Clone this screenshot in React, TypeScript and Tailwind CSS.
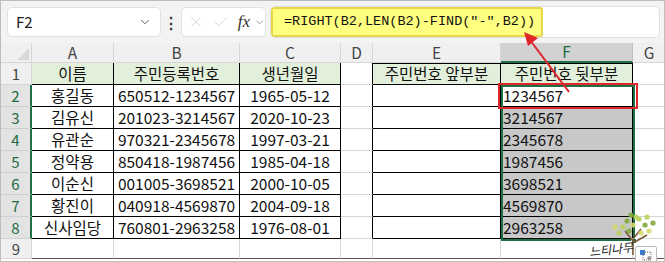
import { ChevronDown, X, Check } from "lucide-react";

const COLS = [31, 82, 126, 101, 32, 128, 132, 33];
const LETTERS = ["", "A", "B", "C", "D", "E", "F", "G"];

const DATA = [
  ["홍길동", "650512-1234567", "1965-05-12", "1234567"],
  ["김유신", "201023-3214567", "2020-10-23", "3214567"],
  ["유관순", "970321-2345678", "1997-03-21", "2345678"],
  ["정약용", "850418-1987456", "1985-04-18", "1987456"],
  ["이순신", "001005-3698521", "2000-10-05", "3698521"],
  ["황진이", "040918-4569870", "2004-09-18", "4569870"],
  ["신사임당", "760801-2963258", "1976-08-01", "2963258"],
];

const font = { fontFamily: '"Noto Sans CJK KR", "Noto Sans", sans-serif' };

function Cell({
  w,
  h,
  children,
  className = "",
}: {
  w: number;
  h: number;
  children?: React.ReactNode;
  className?: string;
}) {
  return (
    <div
      style={{ width: w, height: h }}
      className={`shrink-0 box-border flex items-center whitespace-nowrap leading-none ${className}`}
    >
      {children}
    </div>
  );
}

function FormulaBar() {
  return (
    <div className="flex items-center h-[42px] bg-[#f3f3f3] pl-[6px] pr-[4px] gap-0">
      <div className="flex items-center justify-between w-[154px] h-[30px] bg-white rounded-[5px] border border-[#e2e2e2] pl-[8px] pr-[8px]">
        <span className="text-[15px] text-[#222]">F2</span>
        <ChevronDown className="w-[14px] h-[14px] text-[#555]" strokeWidth={1.6} />
      </div>
      <div className="w-[20px] flex justify-center text-[#444] text-[16px] font-bold leading-none">⋮</div>
      <div className="flex items-center w-[85px] h-[30px] bg-white rounded-[5px] border border-[#e2e2e2] pl-[5px] gap-[4px]">
        <X className="w-[18px] h-[18px] text-[#cfcfcf]" strokeWidth={1.1} />
        <Check className="w-[18px] h-[18px] text-[#cfcfcf] ml-[3px]" strokeWidth={1.1} />
        <span
          className="ml-[4px] text-[17px] italic text-[#333]"
          style={{ fontFamily: '"Liberation Serif", serif' }}
        >
          fx
        </span>
        <ChevronDown className="w-[11px] h-[11px] text-[#777]" strokeWidth={1.6} />
      </div>
      <div className="flex flex-1 h-[32px] ml-[4px] bg-white rounded-[5px] border border-[#e0e0e0] overflow-hidden">
        <div
          className="flex items-center w-[272px] h-full bg-[#ffff80] border-2 border-[#e8d64a] rounded-[3px] pl-[11px] text-[13.5px] text-[#111]"
          style={{ fontFamily: '"Liberation Mono", monospace' }}
        >
          =RIGHT(B2,LEN(B2)-FIND("-",B2))
        </div>
      </div>
    </div>
  );
}

function HeaderRow() {
  return (
    <div className="flex">
      {COLS.map((w, i) => {
        const sel = i === 6;
        if (i === 0) {
          return (
            <Cell key={i} w={w} h={20} className="bg-[#f0f0f0] border-r border-b border-[#d6d6d6] relative">
              <svg className="absolute right-[2px] bottom-[2px]" width="12" height="12" viewBox="0 0 12 12">
                <polygon points="12,0 12,12 0,12" fill="#d9d9d9" />
              </svg>
            </Cell>
          );
        }
        return (
          <Cell
            key={i}
            w={w}
            h={20}
            className={`justify-center text-[15.5px] border-r ${
              sel
                ? "bg-[#d2d2d2] text-[#1e6b41] border-b-2 border-b-[#1e7145] border-r-[#c0c0c0]"
                : "bg-[#f0f0f0] text-[#444] border-b border-[#d6d6d6]"
            }`}
          >
            {LETTERS[i]}
          </Cell>
        );
      })}
    </div>
  );
}

function RowHead({ n, sel, h }: { n: number; sel: boolean; h: number }) {
  return (
    <Cell
      w={COLS[0]}
      h={h}
      className={`justify-center text-[15px] border-b ${
        sel
          ? "bg-[#e3e3e3] text-[#1e6b41] border-r-2 border-r-[#1e7145] border-b-[#d0d0d0]"
          : "bg-[#f0f0f0] text-[#444] border-r border-[#d6d6d6]"
      }`}
    >
      {n}
    </Cell>
  );
}

const td = "text-[15.5px] text-[#111]";

export default function App() {
  return (
    <div
      className="w-[665px] h-[262px] bg-white overflow-hidden border border-[#bdbdbd] box-border"
      style={font}
    >
      <FormulaBar />
      <div className="relative">
        <HeaderRow />
        {/* row 1 */}
        <div className="flex">
          <RowHead n={1} sel={false} h={22} />
          <Cell w={COLS[1]} h={22} className={`justify-center bg-[#e2efda] ${td} border-r border-b border-black`}>이름</Cell>
          <Cell w={COLS[2]} h={22} className={`justify-center bg-[#e2efda] ${td} border-r border-b border-black`}>주민등록번호</Cell>
          <Cell w={COLS[3]} h={22} className={`justify-center bg-[#e2efda] ${td} border-r border-b border-black`}>생년월일</Cell>
          <Cell w={COLS[4]} h={22} className="border-r border-black border-b border-b-[#d6d6d6]" />
          <Cell w={COLS[5]} h={22} className={`justify-center bg-[#e2efda] ${td} border-r border-b border-black border-t`}>주민번호 앞부분</Cell>
          <Cell w={COLS[6]} h={22} className={`justify-center bg-[#e2efda] ${td} border-r border-b border-black border-t`}>주민번호 뒷부분</Cell>
          <Cell w={COLS[7]} h={22} className="border-b border-[#d6d6d6]" />
        </div>
        {DATA.map((r, i) => (
          <div key={i} className="flex">
            <RowHead n={i + 2} sel={true} h={22} />
            <Cell w={COLS[1]} h={22} className={`justify-center ${td} border-r border-b border-black`}>{r[0]}</Cell>
            <Cell w={COLS[2]} h={22} className={`justify-center ${td} border-r border-b border-black`}>{r[1]}</Cell>
            <Cell w={COLS[3]} h={22} className={`justify-center ${td} border-r border-b border-black`}>{r[2]}</Cell>
            <Cell w={COLS[4]} h={22} className="border-r border-black border-b border-b-[#d6d6d6]" />
            <Cell w={COLS[5]} h={22} className="border-r border-b border-black" />
            <Cell
              w={COLS[6]}
              h={22}
              className={`pl-[2px] ${td} border-r border-b border-black ${i === 0 ? "bg-white" : "bg-[#c8c8c8]"}`}
            >
              {r[3]}
            </Cell>
            <Cell w={COLS[7]} h={22} className="border-b border-[#d6d6d6]" />
          </div>
        ))}
        {/* row 9 */}
        <div className="flex">
          <RowHead n={9} sel={false} h={20} />
          {COLS.slice(1).map((w, i) => (
            <Cell key={i} w={w} h={20} className="border-r border-[#d6d6d6] border-b border-b-[#555]" />
          ))}
        </div>

        {/* selection F2:F8 */}
        <div className="absolute left-[500px] top-[42px] w-[134px] h-[156px] border-2 border-[#1e7145] pointer-events-none" />
        <div className="absolute left-[630px] top-[195px] w-[6px] h-[6px] bg-[#1e7145] border border-white" />
        {/* F2 highlight */}
        <div className="absolute left-[497px] top-[40px] w-[140px] h-[26px] border-2 border-[#e0252b] pointer-events-none" />

        {/* paste options */}
        <div className="absolute left-[634px] top-[203px] w-[22px] h-[17px] bg-white border border-[#bdbdbd] rounded-[2px] flex items-center justify-center">
          <svg width="14" height="12" viewBox="0 0 14 12">
            <rect x="1" y="1" width="5" height="5" fill="#3b7bd6" />
            <rect x="4" y="3" width="8" height="8" fill="none" stroke="#666" strokeWidth="1" strokeDasharray="1 1" />
            <path d="M10 7v4M8 9h4" stroke="#666" strokeWidth="1" />
          </svg>
        </div>

        {/* watermark */}
        <svg className="absolute left-[602px] top-[168px]" width="60" height="45" viewBox="0 0 60 45">
          <path d="M30 44 L30 28 M30 30 L22 20 M30 28 L38 18 M30 32 L44 24" stroke="#7a5a3a" strokeWidth="1.6" fill="none" />
          {[
            [20, 16], [24, 10], [30, 14], [36, 8], [42, 14], [46, 20], [16, 22], [26, 20], [38, 22], [33, 6], [50, 12], [12, 16], [44, 6], [28, 4],
          ].map(([x, y], k) => (
            <circle key={k} cx={x} cy={y} r={2.6} fill={k % 3 === 0 ? "#b9cf5a" : k % 3 === 1 ? "#7fa83a" : "#d4d86a"} opacity="0.9" />
          ))}
        </svg>
        <div
          className="absolute left-[588px] top-[200px] text-[12px] leading-none text-[#222] italic -rotate-6"
          style={{ fontFamily: '"Noto Sans CJK KR", sans-serif' }}
        >
          느티나무
        </div>
      </div>

      {/* arrow */}
      <svg className="absolute left-0 top-0 pointer-events-none" width="665" height="262" viewBox="0 0 665 262">
        <line x1="569" y1="92" x2="530" y2="40" stroke="#e0252b" strokeWidth="2" />
        <polygon points="524,32 538,38 528,46" fill="#e0252b" />
      </svg>
    </div>
  );
}
